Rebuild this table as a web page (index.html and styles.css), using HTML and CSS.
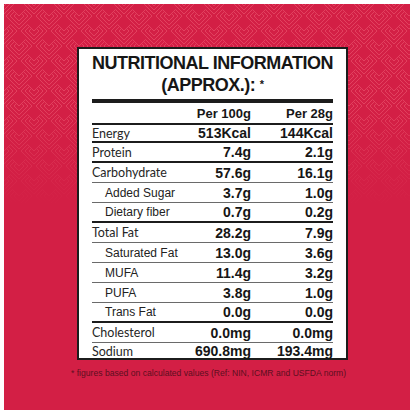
FILE: index.html
```html
<!DOCTYPE html>
<html lang="en">

<head>
    <meta charset="UTF-8">
    <meta name="viewport" content="width=device-width, initial-scale=1.0">
    <title>Nutritional Information</title>
    <link rel="stylesheet" href="styles.css">
</head>

<body>
    <div class="frame">
        <div class="panel">
            <div class="card">
                <h1 class="title">NUTRITIONAL INFORMATION<br>(APPROX.): <span class="ast">*</span></h1>

                <div class="facts">
                    <div class="row head">
                        <span></span>
                        <span class="val">Per 100g</span>
                        <span class="val">Per 28g</span>
                    </div>
                    <div class="row thick energy">
                        <span class="name">Energy</span>
                        <span class="val">513Kcal</span>
                        <span class="val">144Kcal</span>
                    </div>
                    <div class="row thick">
                        <span class="name">Protein</span>
                        <span class="val">7.4g</span>
                        <span class="val">2.1g</span>
                    </div>
                    <div class="row">
                        <span class="name">Carbohydrate</span>
                        <span class="val">57.6g</span>
                        <span class="val">16.1g</span>
                    </div>
                    <div class="row">
                        <span class="name sub">Added Sugar</span>
                        <span class="val">3.7g</span>
                        <span class="val">1.0g</span>
                    </div>
                    <div class="row thick">
                        <span class="name sub">Dietary fiber</span>
                        <span class="val">0.7g</span>
                        <span class="val">0.2g</span>
                    </div>
                    <div class="row">
                        <span class="name">Total Fat</span>
                        <span class="val">28.2g</span>
                        <span class="val">7.9g</span>
                    </div>
                    <div class="row">
                        <span class="name sub">Saturated Fat</span>
                        <span class="val">13.0g</span>
                        <span class="val">3.6g</span>
                    </div>
                    <div class="row">
                        <span class="name sub">MUFA</span>
                        <span class="val">11.4g</span>
                        <span class="val">3.2g</span>
                    </div>
                    <div class="row">
                        <span class="name sub">PUFA</span>
                        <span class="val">3.8g</span>
                        <span class="val">1.0g</span>
                    </div>
                    <div class="row thick">
                        <span class="name sub">Trans Fat</span>
                        <span class="val">0.0g</span>
                        <span class="val">0.0g</span>
                    </div>
                    <div class="row">
                        <span class="name">Cholesterol</span>
                        <span class="val">0.0mg</span>
                        <span class="val">0.0mg</span>
                    </div>
                    <div class="row last">
                        <span class="name">Sodium</span>
                        <span class="val">690.8mg</span>
                        <span class="val">193.4mg</span>
                    </div>
                </div>
            </div>

            <p class="note">* figures based on calculated values (Ref: NIN, ICMR and USFDA norm)</p>
        </div>
    </div>
</body>

</html>
```

FILE: styles.css
```css
* {
    padding: 0;
    margin: 0;
    box-sizing: border-box;
}

body {
    background: white;
    font-family: "Liberation Sans", Arial, sans-serif;
}

.frame {
    width: 416px;
    height: 416px;
    padding: 4px 6px 6px 4px;
}

.panel {
    height: 100%;
    padding-top: 43px;
    background-color: #d31f45;
    background-image:
        linear-gradient(to bottom, rgba(211, 31, 69, 0) 0, rgba(211, 31, 69, 0) 100px, #d31f45 200px),
        url("data:image/svg+xml,%3Csvg xmlns='http://www.w3.org/2000/svg' width='30' height='30'%3E%3Cdefs%3E%3Cg id='h' fill='none' stroke='%23e2415f' stroke-width='1'%3E%3Cpath d='M-13 0L-6.5-6.5L0 0L6.5-6.5L13 0L0 13Z'/%3E%3Cpath d='M-9 0L-4.5-4.5L0 0L4.5-4.5L9 0L0 9Z'/%3E%3Cpath d='M-5 0L-2.5-2.5L0 0L2.5-2.5L5 0L0 5Z'/%3E%3C/g%3E%3C/defs%3E%3Cuse href='%23h' x='15' y='12'/%3E%3Cuse href='%23h' x='0' y='-3'/%3E%3Cuse href='%23h' x='30' y='-3'/%3E%3Cuse href='%23h' x='0' y='27'/%3E%3Cuse href='%23h' x='30' y='27'/%3E%3C/svg%3E");
}

.card {
    width: 271px;
    margin-left: 73px;
    padding: 4px 13px 0;
    background: white;
    border: 2px solid #1c1c1c;
    color: #161616;
}

.title {
    font-size: 18px;
    line-height: 21px;
    font-weight: bold;
    letter-spacing: -0.5px;
    text-align: center;
    margin-bottom: 3px;
}

.ast {
    font-size: 11px;
    vertical-align: 3px;
}

.facts {
    border-top: 4px solid #1c1c1c;
}

.row {
    display: grid;
    grid-template-columns: minmax(0, 1fr) 60px 82px;
    align-items: center;
    height: 20px;
    border-bottom: 1px solid #6a6a6a;
    white-space: nowrap;
}

.row.thick {
    border-bottom: 2px solid #1c1c1c;
}

.row.head {
    height: 22px;
    border-bottom: 2px solid #1c1c1c;
}

.row.head .val {
    font-size: 13px;
}

.row.energy {
    height: 18px;
}

.row.last {
    height: 15px;
    border-bottom: none;
}

.name {
    font-family: Lato, "Liberation Sans", sans-serif;
    font-size: 12.5px;
    color: #262626;
}

.name.sub {
    font-family: "Liberation Sans", Arial, sans-serif;
    font-size: 12px;
    padding-left: 13px;
    color: #222;
}

.val {
    text-align: right;
    font-size: 14px;
    font-weight: bold;
}

.note {
    margin: 8px 0 0 67px;
    font-size: 8.6px;
    line-height: 10px;
    color: #5c0f1f;
    white-space: nowrap;
}
```
